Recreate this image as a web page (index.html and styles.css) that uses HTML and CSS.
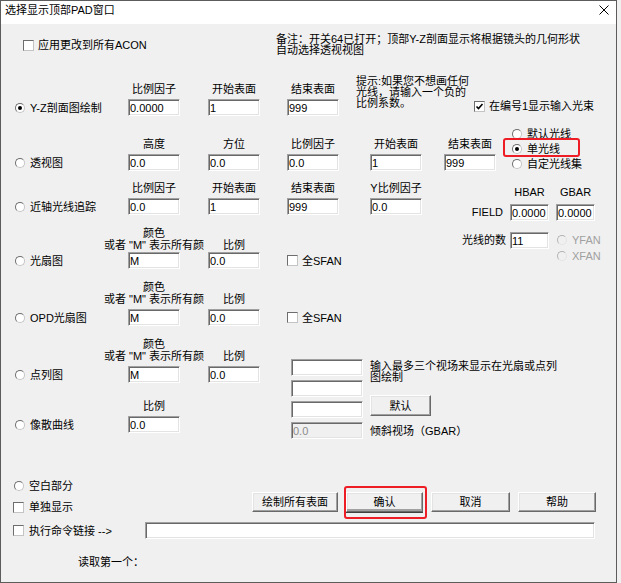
FILE: index.html
```html
<!DOCTYPE html>
<html lang="zh-CN">
<head>
    <meta charset="UTF-8">
    <title>选择显示顶部PAD窗口</title>
    <link rel="stylesheet" href="styles.css">
</head>
<body>

<div class="window">
    <div class="titlebar">
        <span class="title">选择显示顶部PAD窗口</span>
        <svg class="close" width="10" height="10" viewBox="0 0 10 10">
            <path d="M0.5 0.5L9.5 9.5M9.5 0.5L0.5 9.5" stroke="#000" stroke-width="1" fill="none"/>
        </svg>
    </div>

    <div class="client">
        <div class="top">
            <label class="check"><span class="cbox"></span>应用更改到所有ACON</label>
            <div class="note">备注：开关64已打开；顶部Y-Z剖面显示将根据镜头的几何形状<br>自动选择透视视图</div>
        </div>

        <div class="row r1">
            <label class="opt"><span class="radio on"></span>Y-Z剖面图绘制</label>
            <div class="field"><span>比例因子</span><input type="text" value="0.0000"></div>
            <div class="field"><span>开始表面</span><input type="text" value="1"></div>
            <div class="field"><span>结束表面</span><input type="text" value="999"></div>
            <div class="hint">提示:如果您不想画任何<br>光线，请输入一个负的<br>比例系数。</div>
            <label class="check beam">
                <span class="cbox"><svg width="9" height="9" viewBox="0 0 9 9"><path d="M1.5 4.5L3.5 6.5L7.5 2" stroke="#000" stroke-width="1.6" fill="none"/></svg></span>在编号1显示输入光束
            </label>
        </div>

        <div class="row r2">
            <label class="opt"><span class="radio"></span>透视图</label>
            <div class="field"><span>高度</span><input type="text" value="0.0"></div>
            <div class="field"><span>方位</span><input type="text" value="0.0"></div>
            <div class="field"><span>比例因子</span><input type="text" value="0.0"></div>
            <div class="field"><span>开始表面</span><input type="text" value="1"></div>
            <div class="field"><span>结束表面</span><input type="text" value="999"></div>
            <div class="rays">
                <label class="ropt"><span class="radio"></span>默认光线</label>
                <label class="ropt marked"><span class="radio on"></span>单光线</label>
                <label class="ropt"><span class="radio"></span>自定光线集</label>
            </div>
        </div>

        <div class="block b34">
            <div class="stack">
                <div class="row r3">
                    <label class="opt"><span class="radio"></span>近轴光线追踪</label>
                    <div class="field"><span>比例因子</span><input type="text" value="0.0"></div>
                    <div class="field"><span>开始表面</span><input type="text" value="1"></div>
                    <div class="field"><span>结束表面</span><input type="text" value="999"></div>
                    <div class="field"><span>Y比例因子</span><input type="text" value="0.0"></div>
                </div>
                <div class="row r4">
                    <label class="opt"><span class="radio"></span>光扇图</label>
                    <div class="field"><span>颜色<br>或者 "M" 表示所有颜</span><input type="text" value="M"></div>
                    <div class="field"><span>比例</span><input type="text" value="0.0"></div>
                    <label class="check sfan"><span class="cbox"></span>全SFAN</label>
                </div>
            </div>

            <div class="fieldpanel">
                <span class="hd hbar">HBAR</span>
                <span class="hd gbar">GBAR</span>
                <span class="lbl lbl-field">FIELD</span>
                <input type="text" class="sm in-h" value="0.0000">
                <input type="text" class="sm in-g" value="0.0000">
                <span class="lbl lbl-rays">光线的数</span>
                <input type="text" class="sm in-rays" value="11">
                <div class="fan">
                    <label class="ropt off"><span class="radio"></span>YFAN</label>
                    <label class="ropt off"><span class="radio"></span>XFAN</label>
                </div>
            </div>
        </div>

        <div class="row r5">
            <label class="opt"><span class="radio"></span>OPD光扇图</label>
            <div class="field"><span>颜色<br>或者 "M" 表示所有颜</span><input type="text" value="M"></div>
            <div class="field"><span>比例</span><input type="text" value="0.0"></div>
            <label class="check sfan"><span class="cbox"></span>全SFAN</label>
        </div>

        <div class="block b67">
            <div class="stack narrow">
                <div class="row r6">
                    <label class="opt"><span class="radio"></span>点列图</label>
                    <div class="field"><span>颜色<br>或者 "M" 表示所有颜</span><input type="text" value="M"></div>
                    <div class="field"><span>比例</span><input type="text" value="0.0"></div>
                </div>
                <div class="row r7">
                    <label class="opt"><span class="radio"></span>像散曲线</label>
                    <div class="field"><span>比例</span><input type="text" value="0.0"></div>
                </div>
            </div>

            <div class="fields3">
                <input type="text" class="wide f1">
                <div class="fhint">输入最多三个视场来显示在光扇或点列<br>图绘制</div>
                <input type="text" class="wide f2">
                <button class="btn dflt">默认</button>
                <input type="text" class="wide f3">
                <input type="text" class="wide f4" value="0.0" disabled>
                <span class="tilt">倾斜视场（GBAR）</span>
            </div>
        </div>

        <div class="bottom">
            <div class="line1">
                <div class="leftcol">
                    <label class="opt2"><span class="radio"></span>空白部分</label>
                    <label class="check solo"><span class="cbox"></span>单独显示</label>
                </div>
                <div class="buttons">
                    <button class="btn b-all">绘制所有表面</button>
                    <button class="btn b-ok">确认<span class="mark"></span></button>
                    <button class="btn b-cancel">取消</button>
                    <button class="btn b-help">帮助</button>
                </div>
            </div>
            <div class="line2">
                <label class="check cmd"><span class="cbox"></span>执行命令链接 --&gt;</label>
                <input type="text" class="cmdline">
            </div>
            <div class="readfirst">读取第一个：</div>
        </div>
    </div>
</div>

</body>
</html>
```

FILE: styles.css
```css
* {
    box-sizing: border-box;
}

body {
    margin: 0;
    background: #f0f0f0;
    font-family: "Liberation Sans", "Noto Sans CJK SC", sans-serif;
    font-size: 11px;
    line-height: 12px;
    color: #000;
}

.window {
    width: 617px;
    height: 583px;
    border: 1px solid #5c5c5c;
    background: #f0f0f0;
    display: flex;
    flex-direction: column;
    overflow: hidden;
}

.titlebar {
    flex: none;
    height: 23px;
    background: #fff;
    display: flex;
    justify-content: space-between;
    align-items: flex-start;
    padding: 3px 7px 0 4px;
}

.title {
    line-height: 13px;
}

.close {
    margin-top: 1px;
}

.client {
    flex: 1;
    padding-left: 15px;
    display: flex;
    flex-direction: column;
}

/* controls */
.radio {
    flex: none;
    width: 10px;
    height: 10px;
    border-radius: 50%;
    background: #fff;
    border: 1px solid;
    border-color: #6d6d6d #c4c4c4 #c4c4c4 #6d6d6d;
    display: flex;
    align-items: center;
    justify-content: center;
}

.radio.on::after {
    content: "";
    width: 4px;
    height: 4px;
    border-radius: 50%;
    background: #000;
}

.cbox {
    flex: none;
    width: 11px;
    height: 11px;
    background: #fff;
    border: 1px solid;
    border-color: #6d6d6d #c4c4c4 #c4c4c4 #6d6d6d;
    display: flex;
    align-items: center;
    justify-content: center;
}

.check {
    display: flex;
    align-items: center;
    gap: 4px;
    white-space: nowrap;
}

input {
    width: 52px;
    height: 17px;
    margin: 0;
    padding: 0 0 0 1px;
    font: inherit;
    color: #000;
    background: #fff;
    border: 1px solid;
    border-color: #a0a0a0 #fff #fff #a0a0a0;
    box-shadow: inset 1px 1px 0 #696969, inset -1px -1px 0 #e3e3e3;
    outline: none;
}

input:disabled {
    background: #f0f0f0;
    color: #8c8c8c;
}

.btn {
    position: relative;
    height: 20px;
    padding: 0;
    font: inherit;
    color: #000;
    background: #f0f0f0;
    border: 1px solid;
    border-color: #fff #696969 #696969 #fff;
    box-shadow: inset -1px -1px 0 #a0a0a0, inset 1px 1px 0 #e3e3e3;
}

/* top */
.top {
    flex: none;
    height: 52px;
    display: grid;
    grid-template-columns: 260px 1fr;
    align-items: start;
    padding-top: 10px;
}

.top .check {
    margin: 5px 0 0 7px;
}

.note {
    line-height: 11px;
    white-space: nowrap;
}

/* option rows */
.row {
    flex: none;
    display: grid;
    grid-template-columns: 112px 80px 79px 83px 74px 68px 1fr;
}

.r1 {
    height: 40px;
    grid-template-columns: 112px 80px 79px 69px 118px 1fr;
}

.r2 { height: 50px; }
.r3 { height: 49px; }
.r4 { height: 54px; }
.r5 { height: 57px; }
.r6 { height: 57px; }
.r7 { height: 50px; }

.opt {
    align-self: end;
    height: 17px;
    display: flex;
    align-items: center;
    gap: 5px;
    white-space: nowrap;
}

.opt .radio {
    margin-left: -1px;
}

.field {
    align-self: end;
    width: 52px;
    display: flex;
    flex-direction: column;
    align-items: center;
    gap: 4px;
}

.r4 .field {
    gap: 1px;
}

.field span {
    white-space: nowrap;
    text-align: center;
}

.hint {
    align-self: start;
    line-height: 11px;
    white-space: nowrap;
}

.beam {
    align-self: end;
    margin-bottom: 4px;
}

.rays {
    align-self: start;
    margin-top: 10px;
}

.ropt {
    height: 15px;
    display: flex;
    align-items: center;
    gap: 5px;
    white-space: nowrap;
}

.ropt.marked {
    position: relative;
}

.ropt.marked::after {
    content: "";
    position: absolute;
    left: -9px;
    top: -3px;
    bottom: -1px;
    width: 73px;
    border: 2px solid #ee1c25;
    border-radius: 3px;
}

.sfan {
    align-self: end;
    height: 17px;
}

/* blocks with a side panel */
.block {
    flex: none;
    display: flex;
    align-items: flex-start;
}

.b34 .stack {
    width: 446px;
}

.stack.narrow {
    width: 275px;
}

.fieldpanel {
    margin-top: 20px;
    display: grid;
    grid-template-columns: 41px 39px 39px;
    grid-template-rows: 18px 28px 17px;
    column-gap: 7px;
    align-items: start;
}

.fieldpanel .sm {
    width: 39px;
}

.hd {
    text-align: center;
}

.hbar { grid-column: 2; grid-row: 1; }
.gbar { grid-column: 3; grid-row: 1; }
.lbl-field { grid-column: 1; grid-row: 2; }
.in-h { grid-column: 2; grid-row: 2; }
.in-g { grid-column: 3; grid-row: 2; }
.lbl-rays { grid-column: 1; grid-row: 3; }
.in-rays { grid-column: 2; grid-row: 3; }
.fan { grid-column: 3; grid-row: 3; margin-left: 1px; }

.lbl {
    line-height: 17px;
    text-align: right;
    white-space: nowrap;
}

.fan .ropt {
    height: 16px;
}

.ropt.off {
    color: #a0a0a0;
}

.ropt.off .radio {
    background: #f0f0f0;
    border-color: #b4b4b4 #e3e3e3 #e3e3e3 #b4b4b4;
}

.fields3 {
    margin-top: 33px;
    display: grid;
    grid-template-columns: 72px auto;
    grid-template-rows: repeat(4, 17px);
    row-gap: 4px;
    column-gap: 7px;
}

.fields3 .wide {
    width: 72px;
}

.f1 { grid-column: 1; grid-row: 1; }
.f2 { grid-column: 1; grid-row: 2; }
.f3 { grid-column: 1; grid-row: 3; }
.f4 { grid-column: 1; grid-row: 4; }

.fhint {
    grid-column: 2;
    grid-row: 1;
    margin-top: 2px;
    line-height: 11px;
    white-space: nowrap;
}

.dflt {
    grid-column: 2;
    grid-row: 2 / 4;
    align-self: end;
    justify-self: start;
    width: 61px;
    height: 21px;
    margin-bottom: 2px;
}

.tilt {
    grid-column: 2;
    grid-row: 4;
    align-self: center;
    white-space: nowrap;
}

/* bottom */
.bottom {
    flex: none;
}

.line1 {
    margin-top: 39px;
    display: flex;
}

.leftcol {
    width: 236px;
    display: flex;
    flex-direction: column;
    gap: 5px;
}

.opt2 {
    height: 16px;
    display: flex;
    align-items: center;
    gap: 5px;
}

.opt2 .radio {
    margin-left: -2px;
}

.solo {
    height: 16px;
    margin-left: -3px;
    gap: 5px;
}

.buttons {
    align-self: flex-end;
    margin-bottom: 3px;
    display: flex;
    gap: 8px;
}

.b-all { width: 86px; }
.b-ok { width: 77px; box-shadow: inset -1px -2px 0 #a0a0a0, inset 1px 1px 0 #e3e3e3, 0 1px 0 #404040; }
.b-cancel { width: 79px; }
.b-help { width: 78px; }

.mark {
    position: absolute;
    left: -3px;
    right: -5px;
    top: -7px;
    bottom: -8px;
    border: 2px solid #ee1c25;
    border-radius: 3px;
}

.line2 {
    margin-top: 7px;
    display: flex;
    align-items: center;
}

.cmd {
    width: 132px;
    margin-left: -3px;
    gap: 5px;
}

.cmdline {
    width: 450px;
}

.readfirst {
    margin: 17px 0 0 62px;
}
```
